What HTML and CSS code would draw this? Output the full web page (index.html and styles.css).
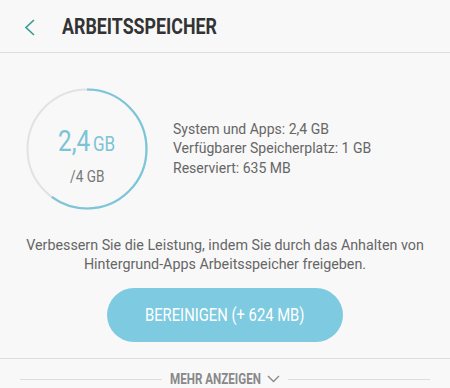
FILE: index.html
```html
<!DOCTYPE html>
<html lang="de">
<head>
  <meta charset="UTF-8">
  <meta name="viewport" content="width=device-width, initial-scale=1.0">
  <title>Arbeitsspeicher</title>
  <link rel="stylesheet" href="styles.css">
</head>
<body>
  <div class="header">
    <svg class="back" width="12" height="17" viewBox="0 0 12 17"><path d="M10 1 L2 8.5 L10 16" fill="none" stroke="#3d9b95" stroke-width="1.7"/></svg>
    <h1><span class="narrow">ARBEITSSPEICHER</span></h1>
  </div>

  <div class="main-content">
    <div class="usage">
      <div class="ring">
        <svg width="122" height="122" viewBox="0 0 122 122">
          <circle cx="61" cy="61" r="59.5" fill="none" stroke="#e2e2e2" stroke-width="2"/>
          <circle cx="61" cy="61" r="59.5" fill="none" stroke="#7cc6da" stroke-width="2.2"
                  stroke-dasharray="224.3 400" transform="rotate(-90 61 61)"/>
        </svg>
        <div class="ring-text">
          <div class="used"><span class="num">2,4</span><span class="unit">GB</span></div>
          <div class="total"><span class="narrow-sm">/4 GB</span></div>
        </div>
      </div>
      <div class="details">
        <p>System und Apps: 2,4 GB</p>
        <p>Verfügbarer Speicherplatz: 1 GB</p>
        <p>Reserviert: 635 MB</p>
      </div>
    </div>

    <p class="hint">Verbessern Sie die Leistung, indem Sie durch das Anhalten von Hintergrund-Apps Arbeitsspeicher freigeben.</p>

    <a href="#" class="button"><span class="narrow-btn">BEREINIGEN (+ 624 MB)</span></a>
  </div>

  <div class="footer">
    <span class="rule"></span>
    <span class="more"><span class="narrow-more">MEHR ANZEIGEN</span>
      <svg width="13" height="8" viewBox="0 0 13 8"><path d="M1 1 L6.5 6.5 L12 1" fill="none" stroke="#8a8a8a" stroke-width="1.4"/></svg>
    </span>
    <span class="rule"></span>
  </div>
</body>
</html>
```

FILE: styles.css
```css
body {
  margin: 0;
  padding: 0;
  background-color: #f8f8f8;
  font-family: Roboto, "Noto Sans", sans-serif;
  color: #666666;
  width: 450px;
  height: 388px;
  overflow: hidden;
}
.header {
  height: 52px;
  border-bottom: 1px solid #dedede;
  display: flex;
  align-items: center;
  padding-left: 24px;
}
.back {
  display: block;
  margin-top: 2px;
}
.header h1 {
  margin: 0 0 0 26px;
  font-size: 22px;
  font-weight: 700;
  color: #333333;
  white-space: nowrap;
}
.narrow {
  display: inline-block;
  transform: scaleX(0.81);
  transform-origin: left center;
}
.main-content {
  padding-top: 35px;
  text-align: center;
}
.usage {
  display: flex;
  align-items: center;
  padding-left: 26px;
  gap: 25px;
  text-align: left;
}
.ring {
  width: 122px;
  height: 122px;
  display: grid;
  flex-shrink: 0;
}
.ring svg, .ring-text {
  grid-area: 1 / 1;
}
.ring-text {
  display: flex;
  flex-direction: column;
  align-items: center;
  justify-content: center;
  padding-top: 16px;
}
.used {
  color: #7cc3d6;
  line-height: 26px;
  white-space: nowrap;
}
.used .num {
  display: inline-block;
  font-size: 29px;
  transform: scaleX(0.84);
  transform-origin: left center;
  margin-right: -4px;
}
.used .unit {
  display: inline-block;
  font-size: 20px;
  transform: scaleX(0.85);
  transform-origin: left center;
  margin-right: -3px;
}
.narrow-sm {
  display: inline-block;
  transform: scaleX(0.85);
}
.total {
  color: #777777;
  font-size: 16px;
  margin-top: 8px;
}
.details p {
  margin: 0;
  font-size: 14px;
  line-height: 19.5px;
  color: #666666;
}
.hint {
  margin: 26px 20px 0;
  font-size: 14.3px;
  line-height: 19px;
  color: #666666;
}
.button {
  display: inline-flex;
  align-items: center;
  justify-content: center;
  width: 236px;
  height: 54px;
  margin-top: 14px;
  border-radius: 27px;
  background-color: #7ecae0;
  color: #ffffff;
  text-decoration: none;
  font-size: 18.5px;
  white-space: nowrap;
}
.narrow-btn {
  display: inline-block;
  transform: scaleX(0.8);
}
.footer {
  margin-top: 16px;
  border-top: 1px solid #dddddd;
  display: flex;
  align-items: center;
  padding: 0 20px;
  height: 40px;
  gap: 8px;
}
.rule {
  flex: 1;
  height: 1px;
  background-color: #dddddd;
}
.more {
  display: flex;
  align-items: center;
  gap: 4px;
  font-size: 14px;
  font-weight: 700;
  color: #888888;
  white-space: nowrap;
}
.narrow-more {
  display: inline-block;
  transform: scaleX(0.83);
  transform-origin: left center;
  margin-right: -17px;
}
```
